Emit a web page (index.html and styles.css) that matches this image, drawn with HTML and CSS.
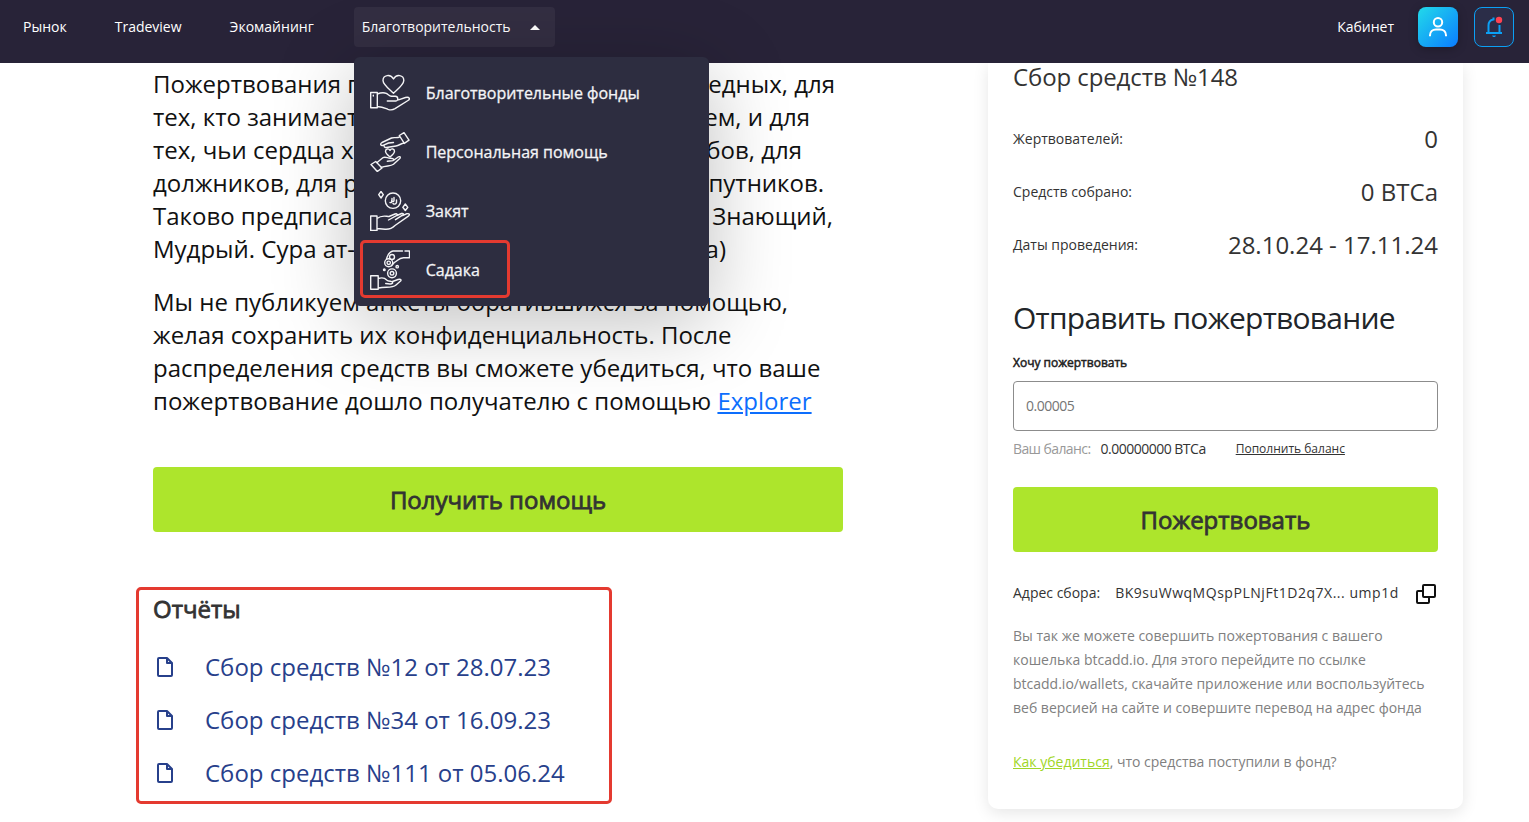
FILE: index.html
```
<!DOCTYPE html>
<html lang="ru">

<head>
    <meta charset="UTF-8">
    <meta name="viewport" content="width=device-width, initial-scale=1.0">
    <title>Благотворительность</title>
    <link rel="stylesheet" href="styles.css">
</head>

<body>
    <header class="header">
        <nav class="nav">
            <a class="nav-link">Рынок</a>
            <a class="nav-link">Tradeview</a>
            <a class="nav-link">Экомайнинг</a>
            <div class="nav-dropdown">
                <a class="nav-toggle"><span>Благотворительность</span><i class="caret"></i></a>
                <div class="dropdown-menu">
                    <a class="dropdown-item">
                        <svg class="item-icon" viewBox="0 0 40 40">
                            <path d="M.7 19.5h6.6v15.2H.7zM7.3 21c3-1.200 7-1.500 9-.6 2 1 3 2.600 5 2.800h4c3 .2 3.500 4.500.5 4.800h-8.500M28.500 26.800l7-2.300c4-1 5 1.700 2.500 3L25 35.700c-2 1.200-5 1.300-7 .6-3-1.200-6-2.600-10.700-2.800"/>
                            <path d="M23.500 20.300C19 16 13 11.500 13 7.500c0-5.500 7.500-7 10.500-1.500 3-5.500 10.300-4 10.300 1.500 0 4-5.800 8.500-10.300 12.800z"/>
                            <path d="M3.300 22.300v.7"/>
                        </svg>
                        <span>Благотворительные фонды</span>
                    </a>
                    <a class="dropdown-item">
                        <svg class="item-icon" viewBox="0 0 40 40">
                            <path d="M29.300 3.500L34 .7l5 7.500-4.700 3.200zM29.800 4.800c-3 1.700-5.500.2-8.300 1.200l-9.500 4.500c-2.500 1.700-.8 3.500 1 2.800l5.500-2.300 5-.5M14 13.500c0 2.500 2 2.200 4 1.700l8-1.200c3-.5 5-2.500 8-3"/>
                            <path d="M20 25c-3-2.300-4.500-4-4.500-5.700 0-2.600 3.200-3.300 4.500-1 1.300-2.300 4.500-1.600 4.500 1 0 1.700-1.500 3.400-4.500 5.700z"/>
                            <path d="M1 32.500l4.700-3 6.300 6.500-4.700 3.500zM6.800 30.800l6-5c2-1.500 4-.2 6 .3 2.500.3 5 .2 5 1.600s-3 1.200-6.500 1.500M24 28l4.500-3.200c2-.8 2.200.8 1 2l-6 5.500c-3 2.300-7 1-12.500 3.200"/>
                        </svg>
                        <span>Персональная помощь</span>
                    </a>
                    <a class="dropdown-item">
                        <svg class="item-icon" viewBox="0 0 40 40">
                            <circle cx="23" cy="9.700" r="7.700"/>
                            <path d="M11 .5l2.300 3.200L11 7 8.700 3.700zM35.300 13l2.500 3.300-2.500 3.200-2.500-3.200z"/>
                            <path d="M20 11.500c1.500.5 2-.5 1.700-2M22 7.500v2.700c1 .8 1.700.3 2-.7M24 6.500v3M26.500 9v2.500c-.7 2-2.500 2-3.500 1"/>
                            <path d="M.7 25H7v14.500H.7zM7 27.500c5-4 9-2 12-2l6-2.500c2-.6 3 .5 1.500 1.700L18.500 29M27 24.500l4.500-2c2-.6 2.500.7 1 1.700l-7 4.500M32.500 24.500l4-1.700c3-.8 3.700 1 1.500 2.500L25 34.500c-3 3-6 4-10 3.700L7 37.500"/>
                        </svg>
                        <span>Закят</span>
                    </a>
                    <a class="dropdown-item marked">
                        <svg class="item-icon" viewBox="0 0 40 40">
                            <path d="M35 1h4.500v6.700h-6M32.500 1H23c-4 .5-5 4-6.500 7.500M33.500 7.700c-5 .3-5.500 3-9 4.600l-3 3.500"/>
                            <circle cx="22" cy="7" r="2.500"/>
                            <circle cx="18.700" cy="12.800" r="4"/>
                            <circle cx="18.700" cy="12.800" r="1.700"/>
                            <circle cx="22" cy="23.300" r="4.400"/>
                            <circle cx="22" cy="23.300" r="1.800"/>
                            <circle cx="14.300" cy="19.700" r=".8"/>
                            <circle cx="27.200" cy="16.700" r="1.200"/>
                            <path d="M.7 25.700h7.500v13.500H.7zM8.200 28.500c4-1.200 7-.2 8.500 1.500 2 2 6 .5 6 2.500s-4 1.500-7 1M22.500 31.500l5.500-2c3-.8 4 .5 2 2L26 35c-4 3.500-10 1.500-17.500 3"/>
                        </svg>
                        <span>Садака</span>
                    </a>
                </div>
            </div>
        </nav>
        <div class="user-area">
            <a class="cabinet">Кабинет</a>
            <button class="user-btn" aria-label="Профиль">
                <svg width="20" height="20" viewBox="0 0 20 20">
                    <circle cx="10" cy="5.200" r="4.200"/>
                    <path d="M2 19.200v-1c0-3.400 2.600-5.700 6-5.700h4c3.400 0 6 2.300 6 5.700v1"/>
                </svg>
            </button>
            <button class="bell-btn" aria-label="Уведомления">
                <svg width="20" height="22" viewBox="0 0 20 22">
                    <path d="M2 17h16M4.500 17V9.500c0-3.300 2-5.500 5-6V1.500M15.500 9v8"/>
                    <path class="bell-fill" d="M8 19.500h4l-1 1.500H9z"/>
                    <circle class="bell-dot" cx="15" cy="4" r="3.200"/>
                </svg>
            </button>
        </div>
    </header>

    <main class="page">
        <section class="content">
            <p class="text">
                <span class="line line-1"><span>Пожертвования предна</span><span>бедных, для</span></span>
                <span class="line line-2"><span>тех, кто занимается</span><span>распределением, и для</span></span>
                <span class="line line-3"><span>тех, чьи сердца хотят</span><span>выкупа рабов, для</span></span>
                <span class="line line-4"><span>должников, для расходов</span><span>путников.</span></span>
                <span class="line line-5"><span>Таково предписание</span><span>Знающий,</span></span>
                <span class="line line-6"><span>Мудрый. Сура ат-Тауба</span><span>(60 аята)</span></span>
            </p>
            <p class="text">
                Мы не публикуем анкеты обратившихся за помощью,<br>
                желая сохранить их конфиденциальность. После<br>
                распределения средств вы сможете убедиться, что ваше<br>
                пожертвование дошло получателю с помощью <a class="explorer">Explorer</a>
            </p>
            <button class="btn help-btn">Получить помощь</button>

            <div class="reports">
                <h3 class="reports-title">Отчёты</h3>
                <a class="report">
                    <svg class="file-icon" width="24" height="24" viewBox="0 0 24 24"><path d="M6 3h8l5 5v12a1 1 0 0 1-1 1H6a1 1 0 0 1-1-1V4a1 1 0 0 1 1-1zM14 3v5h5"/></svg>
                    <span>Сбор средств №12 от 28.07.23</span>
                </a>
                <a class="report">
                    <svg class="file-icon" width="24" height="24" viewBox="0 0 24 24"><path d="M6 3h8l5 5v12a1 1 0 0 1-1 1H6a1 1 0 0 1-1-1V4a1 1 0 0 1 1-1zM14 3v5h5"/></svg>
                    <span>Сбор средств №34 от 16.09.23</span>
                </a>
                <a class="report">
                    <svg class="file-icon" width="24" height="24" viewBox="0 0 24 24"><path d="M6 3h8l5 5v12a1 1 0 0 1-1 1H6a1 1 0 0 1-1-1V4a1 1 0 0 1 1-1zM14 3v5h5"/></svg>
                    <span>Сбор средств №111 от 05.06.24</span>
                </a>
            </div>
        </section>

        <aside class="card">
            <h2 class="card-title">Сбор средств №148</h2>
            <div class="stat"><span class="stat-label">Жертвователей:</span><span class="stat-value">0</span></div>
            <div class="stat"><span class="stat-label">Средств собрано:</span><span class="stat-value">0 BTCa</span></div>
            <div class="stat"><span class="stat-label">Даты проведения:</span><span class="stat-value">28.10.24 - 17.11.24</span></div>

            <h2 class="form-title">Отправить пожертвование</h2>
            <label class="form-label" for="amount">Хочу пожертвовать</label>
            <input class="amount" id="amount" type="text" placeholder="0.00005">
            <div class="balance">
                <span class="balance-label">Ваш баланс:</span>
                <span class="balance-value">0.00000000 BTCa</span>
                <a class="balance-link">Пополнить баланс</a>
            </div>
            <button class="btn">Пожертвовать</button>

            <div class="address">
                <span>Адрес сбора:</span>
                <span class="address-value">BK9suWwqMQspPLNjFt1D2q7X... ump1d</span>
                <svg class="copy-icon" width="24" height="24" viewBox="0 0 24 24"><path d="M10 3h10a1 1 0 0 1 1 1v10a1 1 0 0 1-1 1H10a1 1 0 0 1-1-1V4a1 1 0 0 1 1-1zM9 9H4a1 1 0 0 0-1 1v10a1 1 0 0 0 1 1h10a1 1 0 0 0 1-1v-5"/></svg>
            </div>
            <p class="note">
                Вы так же можете совершить пожертования с вашего<br>
                кошелька btcadd.io. Для этого перейдите по ссылке<br>
                btcadd.io/wallets, скачайте приложение или воспользуйтесь<br>
                веб версией на сайте и совершите перевод на адрес фонда
            </p>
            <p class="note"><a class="verify-link">Как убедиться</a>, что средства поступили в фонд?</p>
        </aside>
    </main>
</body>

</html>
```

FILE: styles.css
```
* {
    box-sizing: border-box;
}

body {
    margin: 0;
    height: 822px;
    overflow: hidden;
    background: #fff;
    color: #111;
    font-family: 'Open Sans', 'Noto Sans', sans-serif;
}

button {
    font-family: inherit;
    border: none;
    cursor: pointer;
}

/* Header */
.header {
    position: relative;
    z-index: 10;
    display: flex;
    justify-content: space-between;
    height: 63px;
    padding: 7px 15px;
    background: #282338;
    color: #fff;
    font-size: 14px;
}

.nav {
    display: flex;
    align-items: flex-start;
}

.nav-link {
    line-height: 40px;
    padding: 0 8px;
    margin-right: 32px;
}

.nav-dropdown {
    position: relative;
}

.nav-toggle {
    display: flex;
    align-items: center;
    justify-content: space-between;
    width: 201px;
    height: 40px;
    padding: 0 15px 0 8px;
    border-radius: 4px;
    background: #332e42;
    line-height: 40px;
}

.caret {
    border: 5px solid transparent;
    border-top: none;
    border-bottom: 5px solid #fff;
}

.dropdown-menu {
    position: absolute;
    top: 50px;
    left: 0;
    width: 355px;
    height: 249px;
    padding: 6px 7px 7px;
    border-radius: 6px;
    background: #2d2d40;
    box-shadow: 0 16px 80px rgba(0, 0, 0, 0.25);
}

.dropdown-item {
    display: flex;
    align-items: center;
    gap: 16px;
    height: 59px;
    padding-left: 9px;
    font-size: 16px;
    color: #f4f4f6;
    -webkit-text-stroke: 0.3px #f4f4f6;
}

.dropdown-item.marked {
    width: 150px;
    height: 58px;
    margin-left: -1px;
    padding: 2px 0 0 7px;
    border: 3px solid #e43a30;
    border-radius: 5px;
}

.item-icon {
    width: 40px;
    height: 40px;
    fill: none;
    stroke: #f4f4f6;
    stroke-width: 1.4;
    stroke-linejoin: round;
    stroke-linecap: round;
}

.user-area {
    display: flex;
    gap: 16px;
}

.cabinet {
    line-height: 40px;
    margin-right: 8px;
}

.user-btn,
.bell-btn {
    display: flex;
    align-items: center;
    justify-content: center;
    width: 40px;
    height: 40px;
    padding: 0;
    border-radius: 8px;
}

.user-btn {
    background: linear-gradient(135deg, #22daea, #0a7cff);
    box-shadow: 0 2px 10px rgba(0, 0, 0, 0.25);
}

.user-btn svg {
    fill: none;
    stroke: #fff;
    stroke-width: 2;
}

.bell-btn {
    background: #2b2d48;
    border: 1px solid #0ba0f5;
}

.bell-btn svg {
    fill: none;
    stroke: #0ba0f5;
    stroke-width: 2;
}

.bell-btn .bell-fill {
    fill: #0ba0f5;
    stroke: none;
}

.bell-btn .bell-dot {
    fill: #ff4252;
    stroke: none;
}

/* Page */
.page {
    display: flex;
    justify-content: space-between;
    padding: 0 66px 0 153px;
}

.content {
    width: 690px;
    padding-top: 4px;
}

.text {
    margin: 0 0 20px;
    font-size: 24px;
    line-height: 33px;
    white-space: nowrap;
}

.line {
    display: flex;
    justify-content: space-between;
}

.line-1 { width: 682px; }
.line-2 { width: 657px; }
.line-3 { width: 649px; }
.line-4 { width: 671px; }
.line-5 { width: 680px; }
.line-6 { width: 573px; }

.explorer {
    color: #0d6efd;
    text-decoration: underline;
}

.btn {
    display: block;
    width: 100%;
    height: 65px;
    border-radius: 4px;
    background: #ade52c;
    color: #333;
    font-size: 24px;
    -webkit-text-stroke: 0.8px #333;
}

.help-btn {
    margin-top: 50px;
}

.reports {
    width: 476px;
    height: 217px;
    margin: 55px 0 0 -17px;
    padding: 2px 14px;
    border: 3px solid #e43a30;
    border-radius: 5px;
}

.reports-title {
    margin: 0 0 15px;
    font-size: 24px;
    line-height: 33px;
    font-weight: 400;
    color: #333;
    -webkit-text-stroke: 0.8px #333;
}

.report {
    display: flex;
    align-items: center;
    gap: 28px;
    height: 53px;
    font-size: 24px;
    color: #27408b;
}

.file-icon {
    fill: none;
    stroke: #27408b;
    stroke-width: 2;
    stroke-linejoin: round;
}

/* Donation card */
.card {
    width: 475px;
    height: 746px;
    padding: 0 25px;
    border-radius: 0 0 10px 10px;
    box-shadow: 0 4px 16px rgba(0, 0, 0, 0.1);
    color: #333;
    white-space: nowrap;
}

.card-title {
    margin: 0 0 31px;
    font-size: 24px;
    line-height: 28px;
    font-weight: 400;
    letter-spacing: -0.1px;
}

.stat {
    display: flex;
    align-items: center;
    justify-content: space-between;
    height: 33px;
    margin-bottom: 20px;
}

.stat-label {
    font-size: 14px;
}

.stat-value {
    font-size: 24px;
}

.form-title {
    margin: 39px 0 0;
    font-size: 30px;
    line-height: 36px;
    font-weight: 400;
    letter-spacing: -0.75px;
    color: #212529;
}

.form-label {
    display: block;
    margin: 18px 0 9px;
    font-size: 12px;
    line-height: 18px;
    color: #222;
    -webkit-text-stroke: 0.5px #222;
}

.amount {
    display: block;
    width: 100%;
    height: 50px;
    padding: 0 12px 2px;
    border: 1px solid #8c8c8c;
    border-radius: 4px;
    font-family: inherit;
    font-size: 14px;
    letter-spacing: -0.5px;
}

.amount::placeholder {
    color: #757575;
}

.balance {
    display: flex;
    align-items: center;
    height: 20px;
    margin: 7px 0 29px;
    font-size: 14px;
    letter-spacing: -0.5px;
}

.balance-label {
    margin-right: 10px;
    color: #999;
    letter-spacing: -0.6px;
}

.balance-link {
    margin-left: 30px;
    font-size: 12px;
    letter-spacing: 0;
    text-decoration: underline;
}

.address {
    display: flex;
    align-items: center;
    height: 24px;
    margin-top: 30px;
    font-size: 14px;
    line-height: 22px;
}

.address span {
    padding-bottom: 2px;
}

.address-value {
    margin-left: 15px;
    letter-spacing: 0.53px;
}

.copy-icon {
    margin-left: auto;
    fill: none;
    stroke: #111;
    stroke-width: 2;
}

.note {
    margin: 18px 0 30px;
    font-size: 14px;
    line-height: 24px;
    color: #808080;
}

.verify-link {
    color: #9fd627;
    text-decoration: underline;
}
```
